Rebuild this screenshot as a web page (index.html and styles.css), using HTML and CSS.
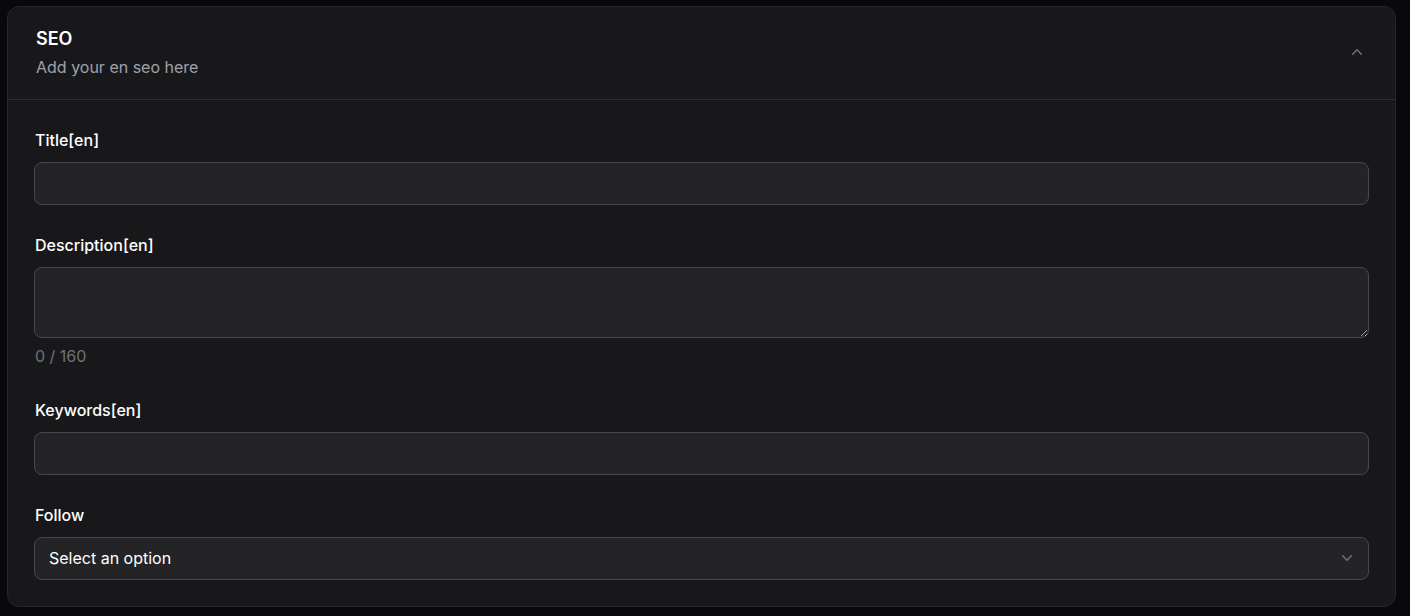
FILE: index.html
```html
<!DOCTYPE html>
<html lang="en">
<head>
<meta charset="utf-8">
<title>SEO</title>
<link rel="stylesheet" href="styles.css">
</head>
<body>
<section class="card">
  <header class="card-header">
    <div class="heading">
      <h3 class="title">SEO</h3>
      <p class="desc">Add your en seo here</p>
    </div>
    <button class="collapse" type="button" aria-label="Collapse">
      <svg viewBox="0 0 20 20" width="20" height="20" fill="currentColor"><path fill-rule="evenodd" d="M14.77 12.79a.75.75 0 01-1.06-.02L10 8.832 6.29 12.77a.75.75 0 11-1.08-1.04l4.25-4.5a.75.75 0 011.08 0l4.25 4.5a.75.75 0 01-.02 1.06z"/></svg>
    </button>
  </header>
  <div class="card-body">
    <div class="field">
      <label class="label" for="title">Title[en]</label>
      <input class="control" id="title" type="text">
    </div>
    <div class="field">
      <label class="label" for="desc">Description[en]</label>
      <textarea class="control area" id="desc"></textarea>
      <p class="counter">0 / 160</p>
    </div>
    <div class="field">
      <label class="label" for="kw">Keywords[en]</label>
      <input class="control" id="kw" type="text">
    </div>
    <div class="field">
      <label class="label" for="follow">Follow</label>
      <div class="control select" id="follow">
        <span>Select an option</span>
        <svg viewBox="0 0 20 20" width="20" height="20" fill="currentColor"><path fill-rule="evenodd" d="M5.23 7.21a.75.75 0 011.06.02L10 11.168l3.71-3.938a.75.75 0 111.08 1.04l-4.25 4.5a.75.75 0 01-1.08 0l-4.25-4.5a.75.75 0 01.02-1.06z"/></svg>
      </div>
    </div>
  </div>
</section>
</body>
</html>
```

FILE: styles.css
```css
* { box-sizing: border-box; }
html, body { margin: 0; }
body {
  background: #09090b;
  font-family: Inter, "Noto Sans", sans-serif;
  color: #fff;
  padding: 6px 14px 9px 7px;
  height: 616px;
}
.card {
  background: #18181b;
  border: 1px solid #27272a;
  border-radius: 12px;
  width: 1389px;
  height: 601px;
}
.card-header {
  display: flex;
  align-items: center;
  justify-content: space-between;
  padding: 20px 28px 20px 28px;
  border-bottom: 1px solid #2e2e31;
}
.title {
  margin: 0;
  font-size: 18px;
  line-height: 24px;
  font-weight: 600;
}
.desc {
  margin: 4px 0 0;
  font-size: 16px;
  line-height: 24px;
  color: #a1a1aa;
}
.collapse {
  background: none;
  border: 0;
  padding: 0;
  width: 20px;
  height: 20px;
  color: #71717a;
  margin-bottom: 3px;
  display: flex;
}
.card-body {
  display: flex;
  flex-direction: column;
  gap: 28px;
  padding: 28px 26px 26px;
}
.field {
  display: flex;
  flex-direction: column;
}
.label {
  font-size: 16px;
  line-height: 24px;
  font-weight: 500;
  margin-bottom: 10px;
  padding-left: 1px;
}
.control {
  display: block;
  width: 100%;
  height: 43px;
  background: #242427;
  border: 1px solid #47474c;
  border-radius: 8px;
  color: #fff;
  font-family: inherit;
  font-size: 16px;
  outline: none;
}
.area {
  height: 71px;
  resize: vertical;
}
.counter {
  margin: 6px 0 2px;
  padding-left: 1px;
  font-size: 16px;
  line-height: 24px;
  color: #71717a;
}
.select {
  display: flex;
  align-items: center;
  justify-content: space-between;
  padding: 0 11px 2px 14px;
  line-height: 24px;
}
.select svg {
  color: #6b7280;
}
```
